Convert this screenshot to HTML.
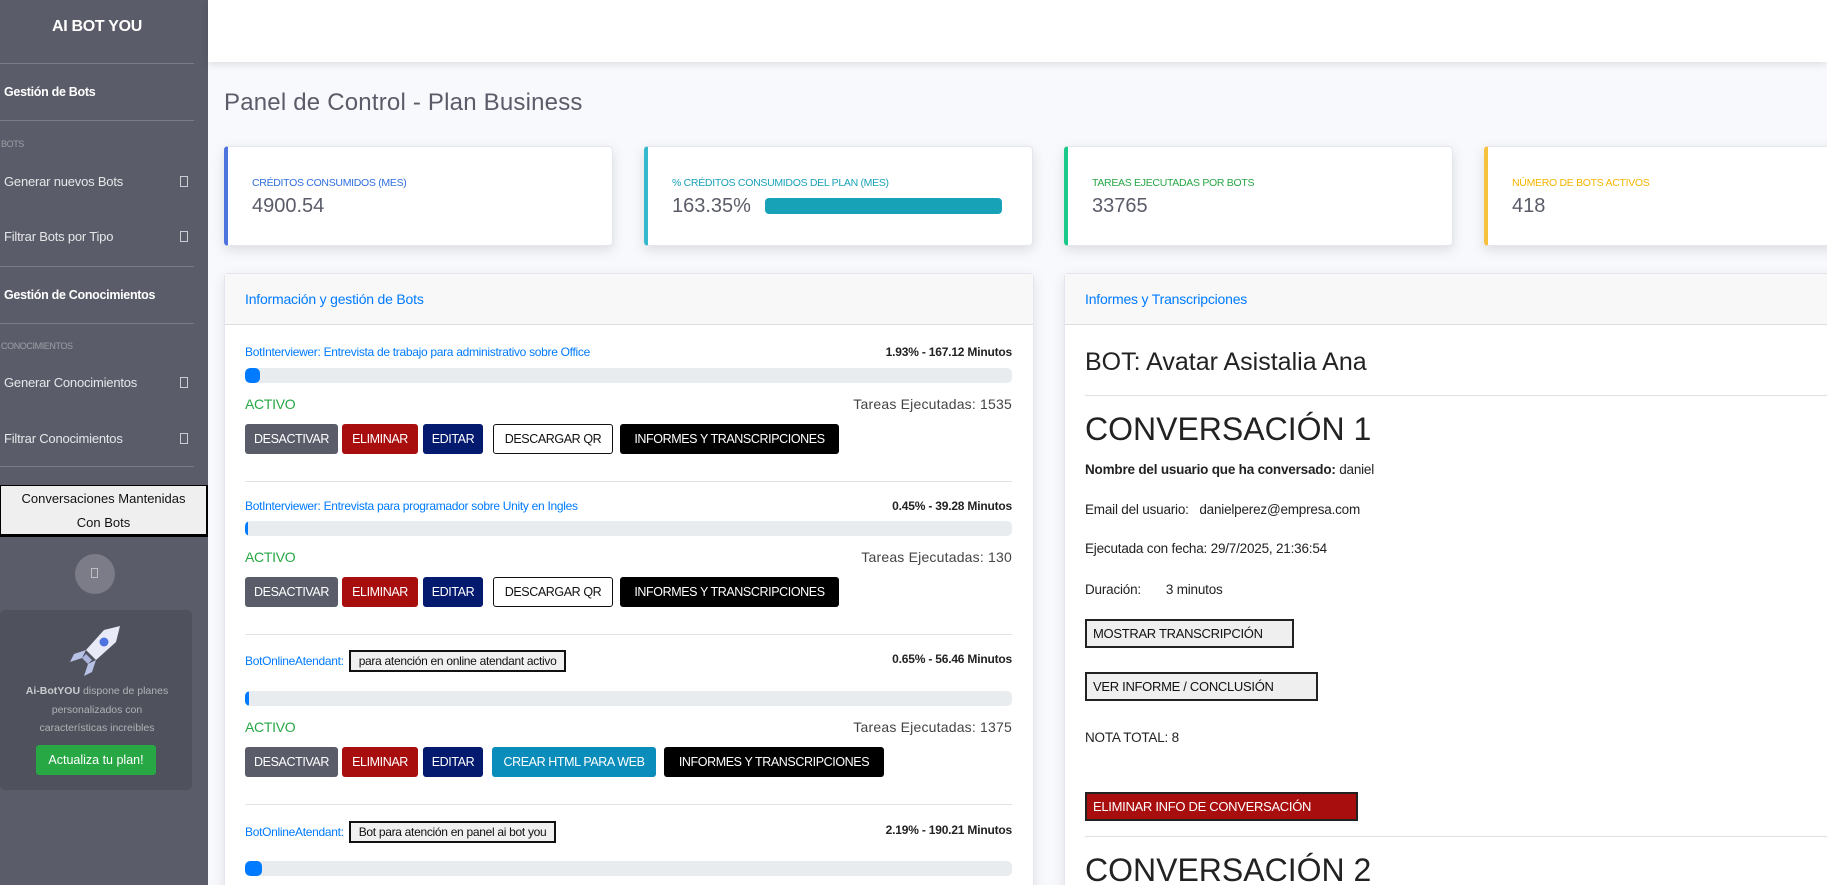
<!DOCTYPE html>
<html style="width:1827px;height:885px;overflow:hidden"><head><meta charset="utf-8"><style>
*{box-sizing:border-box;margin:0;padding:0}
body{width:1827px;height:885px;overflow:hidden;background:#f8f9fc;font-family:"Liberation Sans",sans-serif;position:relative;color:#333}
.a{position:absolute;white-space:nowrap}
#sb{position:absolute;left:0;top:0;width:208px;height:885px;background:#5a5c69;color:#fff}
.hr{position:absolute;left:0;width:194px;height:1px;background:rgba(255,255,255,.2)}
.sh{font-size:12.5px;font-weight:bold;letter-spacing:-.3px}
.sl{font-size:9px;color:rgba(255,255,255,.4);letter-spacing:-.4px}
.si{font-size:13px;color:rgba(255,255,255,.85);letter-spacing:-.2px}
.ic{position:absolute;left:180px;width:8px;height:11px;border:1px solid rgba(255,255,255,.7)}
#top{position:absolute;left:208px;top:0;right:0;height:62px;background:#fff;box-shadow:0 2px 8px rgba(0,0,0,.12)}
.card{position:absolute;top:146px;height:100px;background:#fff;border-radius:4px;box-shadow:0 4px 12px rgba(58,59,69,.15);border:1px solid #e3e6f0}
.card .lb{position:absolute;left:24px;top:30px;font-size:10.5px;letter-spacing:-.3px}
.card .v{position:absolute;left:24px;top:48px;font-size:20px;color:#5a5c69}
.pan{position:absolute;top:273px;background:#fff;border:1px solid #e3e6f0;border-radius:4px;box-shadow:0 4px 12px rgba(58,59,69,.12);height:640px}
.ph{height:51px;background:#f8f8f9;border-bottom:1px solid #ddd;color:#007bff;font-size:14px;padding:17px 0 0 20px;letter-spacing:-.2px}
.t{font-size:12px;color:#007bff;letter-spacing:-.3px}
.m{font-size:12px;color:#222;letter-spacing:-.2px;font-weight:bold;font-weight:600;text-align:right}
.bar{position:absolute;left:245px;width:767px;height:15px;background:#e9ecef;border-radius:5px;overflow:hidden}
.bar i{display:block;height:100%;background:#007bff;border-radius:5px}
.ac{font-size:14px;color:#28a745;letter-spacing:-.3px}
.te{font-size:14px;color:#444;letter-spacing:.2px}
.b{position:absolute;height:30px;font-size:12.5px;color:#fff;border-radius:3px;text-align:center;line-height:30px;letter-spacing:-.4px;white-space:nowrap}
.g{background:#5a5c69}.r{background:#a80e0e}.n{background:#041a6e}.w{background:#fff;color:#111;border:1px solid #111;line-height:28px}.k{background:#000}.c{background:#0a8dbb}
.sep{position:absolute;left:245px;width:767px;height:1px;background:#e3e3e3}
.bx{display:inline-block;border:2px solid #111;background:#f0f0f0;color:#111;padding:2px 8px;font-size:12px;margin-left:5px}
.rb{position:absolute;left:1085px;border:2px solid #222;background:#efefef;font-size:13px;color:#111;padding:0 6px;height:29px;line-height:25px;letter-spacing:-.3px}
.rt{position:absolute;left:1085px;font-size:13.5px;color:#222;letter-spacing:-.2px}
</style></head><body>
<div id="sb">
<div class="a" style="left:0;width:194px;text-align:center;top:18px;font-size:16px;font-weight:bold;letter-spacing:-.3px">AI BOT YOU</div>
<div class="hr" style="top:63px"></div>
<div class="a sh" style="left:4px;top:85px">Gestión de Bots</div>
<div class="hr" style="top:120px"></div>
<div class="a sl" style="left:1px;top:139px">BOTS</div>
<div class="a si" style="left:4px;top:174px">Generar nuevos Bots</div><div class="ic" style="top:176px"></div>
<div class="a si" style="left:4px;top:229px">Filtrar Bots por Tipo</div><div class="ic" style="top:231px"></div>
<div class="hr" style="top:266px"></div>
<div class="a sh" style="left:4px;top:288px">Gestión de Conocimientos</div>
<div class="hr" style="top:323px"></div>
<div class="a sl" style="left:1px;top:341px">CONOCIMIENTOS</div>
<div class="a si" style="left:4px;top:375px">Generar Conocimientos</div><div class="ic" style="top:377px"></div>
<div class="a si" style="left:4px;top:431px">Filtrar Conocimientos</div><div class="ic" style="top:433px"></div>
<div class="hr" style="top:466px"></div>
<div style="position:absolute;left:0;top:485px;width:208px;height:52px;background:#efefef;border:1px solid #000;border-bottom-width:3px;border-right-width:2px;color:#111;font-size:13px;text-align:center;line-height:24px;padding-top:1px">Conversaciones Mantenidas<br>Con Bots</div>
<div style="position:absolute;left:75px;top:554px;width:40px;height:40px;border-radius:50%;background:rgba(255,255,255,.2)"></div>
<div style="position:absolute;left:91px;top:568px;width:7px;height:10px;border:1px solid rgba(255,255,255,.5)"></div>
<div style="position:absolute;left:0;top:610px;width:192px;height:180px;background:#4f515c;border-radius:5px"></div>
<svg style="position:absolute;left:68px;top:624px" width="56" height="52" viewBox="0 0 56 52"><path d="M52 2 L36 6 L18 26 L28 36 L48 18 Z" fill="#e8ebf7"/><path d="M18 26 L6 30 L2 38 L14 34 Z M28 36 L24 48 L16 52 L20 40 Z" fill="#b7c2e6"/><path d="M18 30 L24 36 L20 40 L14 34Z" fill="#aab4dc"/><circle cx="36" cy="18" r="4.5" fill="#4e73df"/></svg>
<div class="a" style="left:0;width:194px;text-align:center;top:682px;font-size:10.5px;line-height:18.5px;color:rgba(255,255,255,.55);white-space:normal;padding:0 18px"><b style="color:rgba(255,255,255,.7)">Ai-BotYOU</b> dispone de planes personalizados con características increibles</div>
<div style="position:absolute;left:36px;top:745px;width:120px;height:30px;background:#28a745;border-radius:3px;color:#fff;font-size:12.5px;text-align:center;line-height:30px">Actualiza tu plan!</div>
</div>
<div id="top"></div>
<div class="a" style="left:224px;top:89px;font-size:24px;color:#5a5c69;letter-spacing:.2px">Panel de Control - Plan Business</div>

<div class="card" style="left:224px;width:389px;border-left:4px solid #4e73df"><div class="lb" style="color:#2f6fe0">CRÉDITOS CONSUMIDOS (MES)</div><div class="v">4900.54</div></div>
<div class="card" style="left:644px;width:389px;border-left:4px solid #36b9cc"><div class="lb" style="color:#17a2b8">% CRÉDITOS CONSUMIDOS DEL PLAN (MES)</div><div class="v">163.35%</div><div style="position:absolute;left:117px;top:51px;width:237px;height:16px;background:#17a2b8;border-radius:4px"></div></div>
<div class="card" style="left:1064px;width:389px;border-left:4px solid #1cc88a"><div class="lb" style="color:#28a745">TAREAS EJECUTADAS POR BOTS</div><div class="v">33765</div></div>
<div class="card" style="left:1484px;width:360px;border-left:4px solid #f6c23e"><div class="lb" style="color:#f6b400">NÚMERO DE BOTS ACTIVOS</div><div class="v">418</div></div>

<div class="pan" style="left:224px;width:810px"><div class="ph">Información y gestión de Bots</div></div>
<div class="pan" style="left:1064px;width:780px"><div class="ph">Informes y Transcripciones</div></div>

<div class="a t" style="left:245px;top:345px">BotInterviewer: Entrevista de trabajo para administrativo sobre Office</div>
<div class="a m" style="right:815px;top:345px">1.93% - 167.12 Minutos</div>
<div class="bar" style="top:368px"><i style="width:15px"></i></div>
<div class="a ac" style="left:245px;top:396px">ACTIVO</div>
<div class="a te" style="right:815px;top:396px">Tareas Ejecutadas: 1535</div>
<div class="b g" style="left:245px;top:424px;width:93px">DESACTIVAR</div>
<div class="b r" style="left:342px;top:424px;width:76px">ELIMINAR</div>
<div class="b n" style="left:423px;top:424px;width:60px">EDITAR</div>
<div class="b w" style="left:493px;top:424px;width:120px">DESCARGAR QR</div>
<div class="b k" style="left:620px;top:424px;width:219px">INFORMES Y TRANSCRIPCIONES</div>
<div class="sep" style="top:481px"></div>

<div class="a t" style="left:245px;top:499px">BotInterviewer: Entrevista para programador sobre Unity en Ingles</div>
<div class="a m" style="right:815px;top:499px">0.45% - 39.28 Minutos</div>
<div class="bar" style="top:521px"><i style="width:3px"></i></div>
<div class="a ac" style="left:245px;top:549px">ACTIVO</div>
<div class="a te" style="right:815px;top:549px">Tareas Ejecutadas: 130</div>
<div class="b g" style="left:245px;top:577px;width:93px">DESACTIVAR</div>
<div class="b r" style="left:342px;top:577px;width:76px">ELIMINAR</div>
<div class="b n" style="left:423px;top:577px;width:60px">EDITAR</div>
<div class="b w" style="left:493px;top:577px;width:120px">DESCARGAR QR</div>
<div class="b k" style="left:620px;top:577px;width:219px">INFORMES Y TRANSCRIPCIONES</div>
<div class="sep" style="top:634px"></div>

<div class="a t" style="left:245px;top:650px">BotOnlineAtendant:<span class="bx">para atención en online atendant activo</span></div>
<div class="a m" style="right:815px;top:652px">0.65% - 56.46 Minutos</div>
<div class="bar" style="top:691px"><i style="width:4px"></i></div>
<div class="a ac" style="left:245px;top:719px">ACTIVO</div>
<div class="a te" style="right:815px;top:719px">Tareas Ejecutadas: 1375</div>
<div class="b g" style="left:245px;top:747px;width:93px">DESACTIVAR</div>
<div class="b r" style="left:342px;top:747px;width:76px">ELIMINAR</div>
<div class="b n" style="left:423px;top:747px;width:60px">EDITAR</div>
<div class="b c" style="left:492px;top:747px;width:164px">CREAR HTML PARA WEB</div>
<div class="b k" style="left:664px;top:747px;width:220px">INFORMES Y TRANSCRIPCIONES</div>
<div class="sep" style="top:804px"></div>

<div class="a t" style="left:245px;top:821px">BotOnlineAtendant:<span class="bx">Bot para atención en panel ai bot you</span></div>
<div class="a m" style="right:815px;top:823px">2.19% - 190.21 Minutos</div>
<div class="bar" style="top:861px"><i style="width:17px"></i></div>

<div class="a" style="left:1085px;top:348px;font-size:25px;color:#222">BOT: Avatar Asistalia Ana</div>
<div class="a" style="left:1085px;top:395px;width:760px;height:1px;background:#e0e0e0"></div>
<div class="a" style="left:1085px;top:411px;font-size:32px;color:#222">CONVERSACIÓN 1</div>
<div class="rt" style="top:462px"><span style="font-weight:600">Nombre del usuario que ha conversado:</span> daniel</div>
<div class="rt" style="top:502px">Email del usuario: &nbsp; danielperez@empresa.com</div>
<div class="rt" style="top:541px">Ejecutada con fecha: 29/7/2025, 21:36:54</div>
<div class="rt" style="top:582px">Duración: &nbsp; &nbsp; &nbsp; 3 minutos</div>
<div class="rb" style="top:619px;width:209px">MOSTRAR TRANSCRIPCIÓN</div>
<div class="rb" style="top:672px;width:233px">VER INFORME / CONCLUSIÓN</div>
<div class="rt" style="top:730px">NOTA TOTAL: 8</div>
<div class="rb" style="top:792px;width:273px;background:#a80e0e;color:#fff">ELIMINAR INFO DE CONVERSACIÓN</div>
<div class="a" style="left:1085px;top:836px;width:760px;height:1px;background:#e0e0e0"></div>
<div class="a" style="left:1085px;top:852px;font-size:32px;color:#222">CONVERSACIÓN 2</div>
</body></html>
